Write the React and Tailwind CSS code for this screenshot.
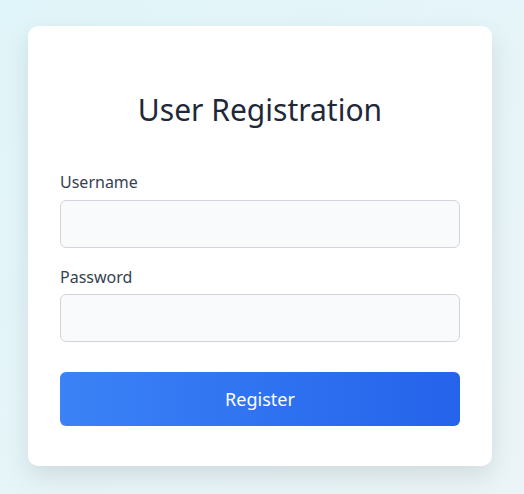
export default function App() {
  return (
    <div
      className="min-h-screen w-full bg-gradient-to-br from-[#e0f5f9] to-[#ebf4f7] pt-[26px] pl-[28px]"
      style={{ fontFamily: '"Noto Sans", "Open Sans", sans-serif' }}
    >
      <div className="w-[464px] h-[440px] bg-white rounded-[10px] shadow-[0_10px_25px_rgba(0,0,0,0.10)] px-8 pt-[66px]">
        <h1 className="text-[30px] leading-[36px] text-center text-[#1f2937] font-normal">
          User Registration
        </h1>

        <form className="mt-[42px]" onSubmit={(e) => e.preventDefault()}>
          <label className="block text-base leading-6 text-[#374151]">Username</label>
          <input
            type="text"
            className="mt-[6px] block w-full h-12 bg-[#f9fafb] border border-[#d1d5db] rounded-md px-3 outline-none"
          />

          <label className="block mt-[17px] text-base leading-6 text-[#374151]">Password</label>
          <input
            type="password"
            className="mt-[5px] block w-full h-12 bg-[#f9fafb] border border-[#d1d5db] rounded-md px-3 outline-none"
          />

          <button
            type="submit"
            className="mt-[30px] w-full h-[54px] rounded-md bg-gradient-to-r from-[#3b82f6] to-[#2563eb] text-white text-lg"
          >
            Register
          </button>
        </form>
      </div>
    </div>
  );
}
